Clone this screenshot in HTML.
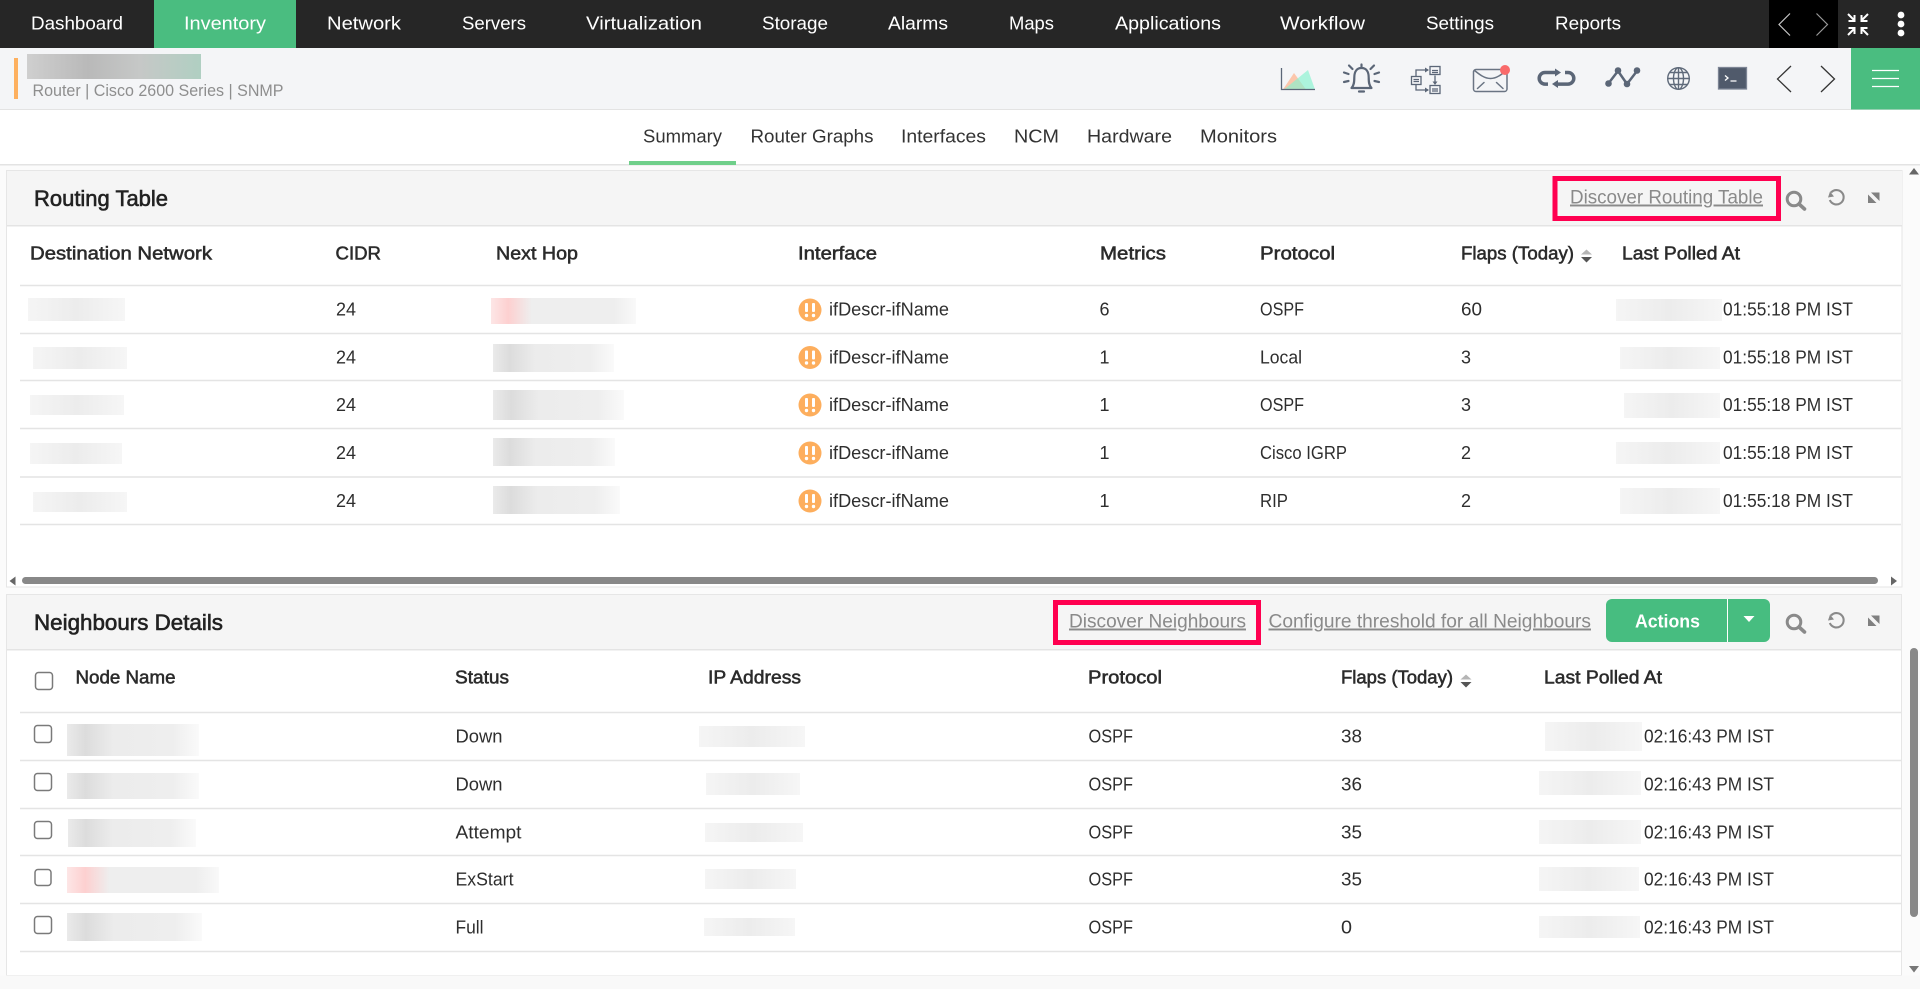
<!DOCTYPE html>
<html>
<head>
<meta charset="utf-8">
<title>Routing Table</title>
<style>
html,body{margin:0;padding:0;background:#fbfbfb;overflow:hidden}
svg{display:block}
text{font-family:"Liberation Sans",sans-serif;font-size:18px;fill:#2e2e2e}
.n{font-size:18.5px;fill:#fff}
.t{font-size:18.5px;fill:#333}
.h{font-size:18.5px;fill:#2b2b2b;stroke:#2b2b2b;stroke-width:.55}
.ti{font-size:22px;fill:#222;stroke:#222;stroke-width:.6}
.l{font-size:19.5px;fill:#8a8a8a;text-decoration:underline}
.s{font-size:17px;fill:#8e8e8e}
.ck{fill:#fff;stroke:#7a7a7a;stroke-width:1.5}
.ic{fill:none;stroke:#5b6677;stroke-linecap:round;stroke-linejoin:round}
</style>
</head>
<body>
<svg xmlns="http://www.w3.org/2000/svg" width="1920" height="989" viewBox="0 0 1920 989">
<defs>
<linearGradient id="p"><stop offset="0" stop-color="#f5f5f5"/><stop offset=".5" stop-color="#ececec"/><stop offset="1" stop-color="#f6f6f6"/></linearGradient>
<linearGradient id="g"><stop offset="0" stop-color="#eaeaea"/><stop offset=".14" stop-color="#dcdcdc"/><stop offset=".35" stop-color="#ececec"/><stop offset=".8" stop-color="#eeeeee"/><stop offset="1" stop-color="#fafafa"/></linearGradient>
<linearGradient id="r"><stop offset="0" stop-color="#fde6e6"/><stop offset=".12" stop-color="#fdd0d0"/><stop offset=".28" stop-color="#eeeeee"/><stop offset=".85" stop-color="#eeeeee"/><stop offset="1" stop-color="#f9f9f9"/></linearGradient>
<linearGradient id="tb"><stop offset="0" stop-color="#cfcfcf"/><stop offset=".35" stop-color="#b9b9b9"/><stop offset=".65" stop-color="#c6c8c7"/><stop offset="1" stop-color="#b0cfc2"/></linearGradient>
<g id="w"><circle cx="0" cy="0" r="11.5" fill="#fdae5d"/><rect x="-5" y="-7" width="3" height="9" rx="1" fill="#fff"/><rect x="2" y="-7" width="3" height="9" rx="1" fill="#fff"/><circle cx="-3.500" cy="5.500" r="1.700" fill="#fff"/><circle cx="3.500" cy="5.500" r="1.700" fill="#fff"/></g>
<g id="tools">
<circle cx="1794" cy="199" r="6.800" fill="none" stroke="#8a8a8a" stroke-width="3"/><path d="M1799 204l5.500 5" stroke="#8a8a8a" stroke-width="3.600" stroke-linecap="round"/>
<path d="M1831 192.500a7.200 7.200 0 1 1-1.200 7.500" fill="none" stroke="#8a8a8a" stroke-width="2.100"/><path d="M1828 197.500l6-1-4-5z" fill="#8a8a8a"/>
<path d="M1871 192.500h8.500v8.500zM1868 194.500v8.500h8.500z" fill="#808080"/>
</g>
</defs>

<rect width="1920" height="989" fill="#fbfbfb"/>

<!-- top nav -->
<rect width="1920" height="48" fill="#262626"/>
<rect x="154" width="142" height="48" fill="#4abd80"/>
<rect x="1769" width="69" height="48" fill="#000"/>
<text class="n" x="31" y="29.500" textLength="92" lengthAdjust="spacingAndGlyphs">Dashboard</text>
<text class="n" x="184" y="29.500" textLength="82" lengthAdjust="spacingAndGlyphs">Inventory</text>
<text class="n" x="327" y="29.500" textLength="74" lengthAdjust="spacingAndGlyphs">Network</text>
<text class="n" x="462" y="29.500" textLength="64" lengthAdjust="spacingAndGlyphs">Servers</text>
<text class="n" x="586" y="29.500" textLength="116" lengthAdjust="spacingAndGlyphs">Virtualization</text>
<text class="n" x="762" y="29.500" textLength="66" lengthAdjust="spacingAndGlyphs">Storage</text>
<text class="n" x="888" y="29.500" textLength="60" lengthAdjust="spacingAndGlyphs">Alarms</text>
<text class="n" x="1009" y="29.500" textLength="45" lengthAdjust="spacingAndGlyphs">Maps</text>
<text class="n" x="1115" y="29.500" textLength="106" lengthAdjust="spacingAndGlyphs">Applications</text>
<text class="n" x="1280" y="29.500" textLength="85" lengthAdjust="spacingAndGlyphs">Workflow</text>
<text class="n" x="1426" y="29.500" textLength="68" lengthAdjust="spacingAndGlyphs">Settings</text>
<text class="n" x="1555" y="29.500" textLength="66" lengthAdjust="spacingAndGlyphs">Reports</text>
<path d="M1790 13.500l-11 11 11 11" fill="none" stroke="#c8c8c8" stroke-width="1.200"/>
<path d="M1816.500 13.500l11 11-11 11" fill="none" stroke="#9a9a9a" stroke-width="1.200"/>
<g fill="none" stroke="#fff" stroke-width="2">
<path d="M1848 14l6 6M1854.500 15v6h-6"/>
<path d="M1868 14l-6 6M1861.500 15v6h6"/>
<path d="M1848 35l6-6M1854.500 34v-6h-6"/>
<path d="M1868 35l-6-6M1861.500 34v-6h6"/>
</g>
<circle cx="1901" cy="15" r="3.400" fill="#fff"/><circle cx="1901" cy="24" r="3.400" fill="#fff"/><circle cx="1901" cy="33" r="3.400" fill="#fff"/>

<!-- sub header -->
<rect y="48" width="1920" height="61" fill="#f4f5f7"/>
<rect y="109" width="1920" height="1.500" fill="#e3e3e3"/>
<rect x="14" y="58" width="4" height="41" fill="#fdb05f"/>
<rect x="27" y="54" width="174" height="25" fill="url(#tb)"/>
<text class="s" x="32.500" y="96" textLength="251" lengthAdjust="spacingAndGlyphs">Router | Cisco 2600 Series  | SNMP</text>
<rect x="1851" y="48" width="69" height="61.500" fill="#4abd80"/>
<path d="M1872 70.500h27M1872 78.500h27M1872 86.500h27" stroke="#fff" stroke-width="1.300"/>

<!-- chart icon -->
<path d="M1283 89.500l11-16.500 12 16.500z" fill="#ffb592" fill-opacity=".75"/>
<path d="M1284 89.500l24-19.500 7 19.500z" fill="#86f3cf" fill-opacity=".65"/>
<path d="M1281.500 68v21.500h33.500" fill="none" stroke="#5b6677" stroke-width="1.300"/>
<!-- bell icon -->
<g class="ic" stroke-width="2.200">
<path d="M1351.500 88c2.500-2.500 2.800-6 2.800-10.500 0-6 2.500-9.500 7.200-9.500s7.200 3.500 7.200 9.500c0 4.500.3 8 2.800 10.500z"/>
<path d="M1359 91.500h5M1361.500 64.500v2M1349 65.500l3.500 3.500M1374 65.500l-3.500 3.500M1344 72.500l4.500 1.500M1379 72.500l-4.500 1.500M1344 82l4.500-1M1379 82l-4.500-1"/>
</g>
<!-- flow icon -->
<g fill="none" stroke="#5b6677" stroke-width="1.300">
<rect x="1430" y="66.500" width="10" height="8"/><rect x="1411.500" y="76.500" width="9.500" height="8"/><rect x="1430" y="85.500" width="10" height="8"/>
<path d="M1432 70.500h6M1432 72.500h6M1413.500 79.500h5.500M1413.500 81.500h5.500M1432 89h6M1432 91h6"/>
<path d="M1416 76v-6h12M1416 85v5h12M1435 75.500v7"/>
</g>
<path d="M1425 67.500l4 2.500-4 2.500zM1425 87.500l4 2.500-4 2.500zM1432.500 81.500h5l-2.500 3.500z" fill="#5b6677"/>
<!-- mail icon -->
<g fill="none" stroke="#6a7483" stroke-width="1.500" stroke-linecap="round">
<rect x="1473.500" y="69.500" width="33.500" height="22" rx="2.500"/>
<path d="M1474.500 70.500c5 4 10 8 16 8s11-4 16-8M1477.500 88.500l6.500-6M1503 88.500l-6.500-6"/>
</g>
<circle cx="1505" cy="70" r="5" fill="#f96a6a"/>
<!-- repeat icon -->
<g fill="none" stroke="#5b6677" stroke-width="3.500">
<path d="M1556 72.500h-11a5.800 5.800 0 0 0 0 11.600h3"/>
<path d="M1556 84.100h12a5.800 5.800 0 0 0 0-11.600h-3"/>
</g>
<path d="M1555 68.500l6 4-6 4zM1558 80l-6 4 6 4z" fill="#5b6677"/>
<!-- path icon -->
<path d="M1608 84l10-13 9 13 10-13" fill="none" stroke="#5b6677" stroke-width="2.500"/>
<g fill="#5b6677"><circle cx="1608.500" cy="83.500" r="3.300"/><circle cx="1618" cy="70.500" r="3.300"/><circle cx="1627" cy="84" r="3.300"/><circle cx="1637" cy="70.500" r="3.300"/></g>
<!-- globe icon -->
<g fill="none" stroke="#5f6a7a" stroke-width="1.400">
<circle cx="1678.500" cy="78.500" r="10.800"/>
<ellipse cx="1678.500" cy="78.500" rx="5" ry="10.800"/>
<path d="M1678.500 67.500v22M1668 78.500h21M1669.500 72.500h18M1669.500 84.500h18"/>
</g>
<!-- terminal icon -->
<rect x="1718.500" y="67.500" width="28" height="21.500" fill="#505a6b" stroke="#7c8494" stroke-width="1.300"/>
<path d="M1725 75.500l3 2.500-3 2.500M1730.500 81h6" fill="none" stroke="#fff" stroke-width="1.300"/>
<path d="M1791 66l-13.500 13 13.500 13" fill="none" stroke="#333" stroke-width="1.300"/>
<path d="M1821 66l13.500 13-13.500 13" fill="none" stroke="#333" stroke-width="1.300"/>

<!-- tabs -->
<rect y="110" width="1920" height="55" fill="#fff"/>
<rect y="164" width="1920" height="1.500" fill="#e3e3e3"/>
<rect x="629" y="161" width="107" height="4" fill="#6fcf8a"/>
<text class="t" x="643" y="142.500" textLength="79" lengthAdjust="spacingAndGlyphs">Summary</text>
<text class="t" x="750.500" y="142.500" textLength="123" lengthAdjust="spacingAndGlyphs">Router Graphs</text>
<text class="t" x="901" y="142.500" textLength="85" lengthAdjust="spacingAndGlyphs">Interfaces</text>
<text class="t" x="1014" y="142.500" textLength="45" lengthAdjust="spacingAndGlyphs">NCM</text>
<text class="t" x="1087" y="142.500" textLength="85" lengthAdjust="spacingAndGlyphs">Hardware</text>
<text class="t" x="1200" y="142.500" textLength="77" lengthAdjust="spacingAndGlyphs">Monitors</text>

<!-- panel 1 -->
<rect x="6.500" y="170.500" width="1895.500" height="416.500" fill="#fff" stroke="#e6e6e6"/>
<rect x="7" y="171" width="1895" height="54" fill="#f5f5f5"/>
<rect x="7" y="225" width="1895" height="1.500" fill="#e4e4e4"/>
<text class="ti" x="34" y="206" textLength="134" lengthAdjust="spacingAndGlyphs">Routing Table</text>
<rect x="1555" y="178.500" width="223.500" height="40" fill="none" stroke="#ff0050" stroke-width="5"/>
<text class="l" x="1570" y="203.500" textLength="193" lengthAdjust="spacingAndGlyphs">Discover Routing Table</text>
<use href="#tools"/>

<text class="h" x="30" y="259.500" textLength="182" lengthAdjust="spacingAndGlyphs">Destination Network</text>
<text class="h" x="335.500" y="259.500" textLength="45.500" lengthAdjust="spacingAndGlyphs">CIDR</text>
<text class="h" x="496" y="259.500" textLength="82" lengthAdjust="spacingAndGlyphs">Next Hop</text>
<text class="h" x="798" y="259.500" textLength="79" lengthAdjust="spacingAndGlyphs">Interface</text>
<text class="h" x="1100" y="259.500" textLength="66" lengthAdjust="spacingAndGlyphs">Metrics</text>
<text class="h" x="1260" y="259.500" textLength="75" lengthAdjust="spacingAndGlyphs">Protocol</text>
<text class="h" x="1461" y="259.500" textLength="113" lengthAdjust="spacingAndGlyphs">Flaps (Today)</text>
<path d="M1581 254.500l5.500-5 5.500 5z" fill="#b5b5b5"/><path d="M1581 257h11l-5.500 5.500z" fill="#555"/>
<text class="h" x="1622" y="259.500" textLength="118" lengthAdjust="spacingAndGlyphs">Last Polled At</text>

<path d="M20 285.500H1901M20 333.500H1901M20 380.500H1901M20 428.500H1901M20 477H1901M20 524.500H1901" stroke="#e4e4e4" stroke-width="1.500"/>

<!-- routing blurs -->
<rect x="28" y="298" width="97" height="23" fill="url(#p)"/>
<rect x="33" y="347" width="94" height="22" fill="url(#p)"/>
<rect x="30" y="395" width="94" height="20" fill="url(#p)"/>
<rect x="30" y="443" width="92" height="21" fill="url(#p)"/>
<rect x="33" y="492" width="94" height="20" fill="url(#p)"/>
<rect x="491" y="298" width="145" height="26" fill="url(#r)"/>
<rect x="493" y="344" width="121" height="28" fill="url(#g)"/>
<rect x="493" y="390" width="131" height="30" fill="url(#g)"/>
<rect x="493" y="438" width="122" height="28" fill="url(#g)"/>
<rect x="493" y="486" width="127" height="28" fill="url(#g)"/>
<rect x="1616" y="299" width="106" height="22" fill="url(#p)"/>
<rect x="1620" y="347" width="100" height="22" fill="url(#p)"/>
<rect x="1624" y="393" width="96" height="25" fill="url(#p)"/>
<rect x="1616" y="442" width="104" height="22" fill="url(#p)"/>
<rect x="1620" y="488" width="100" height="26" fill="url(#p)"/>

<!-- routing rows -->
<text x="336" y="315.500" textLength="20" lengthAdjust="spacingAndGlyphs">24</text>
<use href="#w" x="810" y="310"/>
<text x="829" y="315.500" textLength="120" lengthAdjust="spacingAndGlyphs">ifDescr-ifName</text>
<text x="1099.500" y="315.500" textLength="10" lengthAdjust="spacingAndGlyphs">6</text>
<text x="1260" y="315.500" textLength="44" lengthAdjust="spacingAndGlyphs">OSPF</text>
<text x="1461" y="315.500" textLength="21" lengthAdjust="spacingAndGlyphs">60</text>
<text x="1723" y="315.500" textLength="130" lengthAdjust="spacingAndGlyphs">01:55:18 PM IST</text>

<text x="336" y="363.500" textLength="20" lengthAdjust="spacingAndGlyphs">24</text>
<use href="#w" x="810" y="357.500"/>
<text x="829" y="363.500" textLength="120" lengthAdjust="spacingAndGlyphs">ifDescr-ifName</text>
<text x="1099.500" y="363.500" textLength="10" lengthAdjust="spacingAndGlyphs">1</text>
<text x="1260" y="363.500" textLength="42" lengthAdjust="spacingAndGlyphs">Local</text>
<text x="1461" y="363.500" textLength="10" lengthAdjust="spacingAndGlyphs">3</text>
<text x="1723" y="363.500" textLength="130" lengthAdjust="spacingAndGlyphs">01:55:18 PM IST</text>

<text x="336" y="411" textLength="20" lengthAdjust="spacingAndGlyphs">24</text>
<use href="#w" x="810" y="405"/>
<text x="829" y="411" textLength="120" lengthAdjust="spacingAndGlyphs">ifDescr-ifName</text>
<text x="1099.500" y="411" textLength="10" lengthAdjust="spacingAndGlyphs">1</text>
<text x="1260" y="411" textLength="44" lengthAdjust="spacingAndGlyphs">OSPF</text>
<text x="1461" y="411" textLength="10" lengthAdjust="spacingAndGlyphs">3</text>
<text x="1723" y="411" textLength="130" lengthAdjust="spacingAndGlyphs">01:55:18 PM IST</text>

<text x="336" y="459" textLength="20" lengthAdjust="spacingAndGlyphs">24</text>
<use href="#w" x="810" y="453"/>
<text x="829" y="459" textLength="120" lengthAdjust="spacingAndGlyphs">ifDescr-ifName</text>
<text x="1099.500" y="459" textLength="10" lengthAdjust="spacingAndGlyphs">1</text>
<text x="1260" y="459" textLength="87" lengthAdjust="spacingAndGlyphs">Cisco IGRP</text>
<text x="1461" y="459" textLength="10" lengthAdjust="spacingAndGlyphs">2</text>
<text x="1723" y="459" textLength="130" lengthAdjust="spacingAndGlyphs">01:55:18 PM IST</text>

<text x="336" y="507" textLength="20" lengthAdjust="spacingAndGlyphs">24</text>
<use href="#w" x="810" y="501"/>
<text x="829" y="507" textLength="120" lengthAdjust="spacingAndGlyphs">ifDescr-ifName</text>
<text x="1099.500" y="507" textLength="10" lengthAdjust="spacingAndGlyphs">1</text>
<text x="1260" y="507" textLength="28" lengthAdjust="spacingAndGlyphs">RIP</text>
<text x="1461" y="507" textLength="10" lengthAdjust="spacingAndGlyphs">2</text>
<text x="1723" y="507" textLength="130" lengthAdjust="spacingAndGlyphs">01:55:18 PM IST</text>

<!-- h scrollbar -->
<rect x="22" y="577" width="1856" height="7" rx="3.500" fill="#888"/>
<path d="M15.500 576.500l-6 4.500 6 4.500z" fill="#666"/>
<path d="M1891 576.500l6 4.500-6 4.500z" fill="#666"/>

<!-- panel 2 -->
<rect x="6.500" y="594.500" width="1895" height="381" fill="#fff" stroke="#e6e6e6"/>
<rect x="7" y="595" width="1894" height="54" fill="#f5f5f5"/>
<rect x="7" y="649" width="1894" height="1.500" fill="#e4e4e4"/>
<text class="ti" x="34" y="630" textLength="189" lengthAdjust="spacingAndGlyphs">Neighbours Details</text>
<rect x="1055.500" y="602.500" width="203" height="40" fill="none" stroke="#ff0050" stroke-width="5"/>
<text class="l" x="1069" y="627.500" textLength="177" lengthAdjust="spacingAndGlyphs">Discover Neighbours</text>
<text class="l" x="1268.500" y="627.500" textLength="322.500" lengthAdjust="spacingAndGlyphs">Configure threshold for all Neighbours</text>
<rect x="1606" y="599" width="164" height="43" rx="6" fill="#47bd80"/>
<rect x="1727" y="599" width="1" height="43" fill="#fff"/>
<text x="1635" y="627.500" textLength="65" lengthAdjust="spacingAndGlyphs" style="font-size:18.5px;font-weight:bold;fill:#fff">Actions</text>
<path d="M1743.500 616h11l-5.500 6z" fill="#fff"/>
<use href="#tools" y="423"/>

<rect x="35.500" y="672.500" width="17" height="17" rx="3" class="ck"/>
<text class="h" x="75.500" y="683.500" textLength="100" lengthAdjust="spacingAndGlyphs">Node Name</text>
<text class="h" x="455" y="683.500" textLength="54" lengthAdjust="spacingAndGlyphs">Status</text>
<text class="h" x="708" y="683.500" textLength="93" lengthAdjust="spacingAndGlyphs">IP Address</text>
<text class="h" x="1088" y="683.500" textLength="74" lengthAdjust="spacingAndGlyphs">Protocol</text>
<text class="h" x="1341" y="683.500" textLength="112" lengthAdjust="spacingAndGlyphs">Flaps (Today)</text>
<path d="M1460.500 679.500l5.500-5 5.500 5z" fill="#b5b5b5"/><path d="M1460.500 682h11l-5.500 5.500z" fill="#555"/>
<text class="h" x="1544" y="683.500" textLength="118" lengthAdjust="spacingAndGlyphs">Last Polled At</text>

<path d="M20 712.500H1901M20 760.500H1901M20 808.500H1901M20 855.500H1901M20 903.500H1901M20 951.500H1901" stroke="#e4e4e4" stroke-width="1.500"/>

<!-- neighbour blurs -->
<rect x="67" y="724" width="132" height="32" fill="url(#g)"/>
<rect x="67" y="773" width="132" height="26" fill="url(#g)"/>
<rect x="68" y="819" width="128" height="28" fill="url(#g)"/>
<rect x="67" y="867" width="152" height="26" fill="url(#r)"/>
<rect x="67" y="913" width="135" height="28" fill="url(#g)"/>
<rect x="699" y="726" width="106" height="21" fill="url(#p)"/>
<rect x="706" y="773" width="94" height="22" fill="url(#p)"/>
<rect x="705" y="823" width="98" height="19" fill="url(#p)"/>
<rect x="705" y="869" width="91" height="20" fill="url(#p)"/>
<rect x="704" y="918" width="91" height="18" fill="url(#p)"/>
<rect x="1545" y="722" width="97" height="29" fill="url(#p)"/>
<rect x="1539" y="771" width="102" height="24" fill="url(#p)"/>
<rect x="1539" y="820" width="102" height="24" fill="url(#p)"/>
<rect x="1539" y="867" width="100" height="24" fill="url(#p)"/>
<rect x="1539" y="916" width="101" height="22" fill="url(#p)"/>

<!-- neighbour rows -->
<rect x="34.500" y="725.500" width="17" height="17" rx="3" class="ck"/>
<text x="455.500" y="742.500" textLength="47" lengthAdjust="spacingAndGlyphs">Down</text>
<text x="1088.500" y="742.500" textLength="44.500" lengthAdjust="spacingAndGlyphs">OSPF</text>
<text x="1341" y="742.500" textLength="21" lengthAdjust="spacingAndGlyphs">38</text>
<text x="1644" y="742.500" textLength="130" lengthAdjust="spacingAndGlyphs">02:16:43 PM IST</text>

<rect x="34.500" y="773.500" width="17" height="17" rx="3" class="ck"/>
<text x="455.500" y="790.500" textLength="47" lengthAdjust="spacingAndGlyphs">Down</text>
<text x="1088.500" y="790.500" textLength="44.500" lengthAdjust="spacingAndGlyphs">OSPF</text>
<text x="1341" y="790.500" textLength="21" lengthAdjust="spacingAndGlyphs">36</text>
<text x="1644" y="790.500" textLength="130" lengthAdjust="spacingAndGlyphs">02:16:43 PM IST</text>

<rect x="34.500" y="821.500" width="17" height="17" rx="3" class="ck"/>
<text x="455.500" y="838.500" textLength="66" lengthAdjust="spacingAndGlyphs">Attempt</text>
<text x="1088.500" y="838.500" textLength="44.500" lengthAdjust="spacingAndGlyphs">OSPF</text>
<text x="1341" y="838.500" textLength="21" lengthAdjust="spacingAndGlyphs">35</text>
<text x="1644" y="838.500" textLength="130" lengthAdjust="spacingAndGlyphs">02:16:43 PM IST</text>

<rect x="35" y="869.500" width="16" height="16" rx="3" class="ck"/>
<text x="455.500" y="885.500" textLength="58" lengthAdjust="spacingAndGlyphs">ExStart</text>
<text x="1088.500" y="885.500" textLength="44.500" lengthAdjust="spacingAndGlyphs">OSPF</text>
<text x="1341" y="885.500" textLength="21" lengthAdjust="spacingAndGlyphs">35</text>
<text x="1644" y="885.500" textLength="130" lengthAdjust="spacingAndGlyphs">02:16:43 PM IST</text>

<rect x="34.500" y="916.500" width="17" height="17" rx="3" class="ck"/>
<text x="455.500" y="933.500" textLength="28" lengthAdjust="spacingAndGlyphs">Full</text>
<text x="1088.500" y="933.500" textLength="44.500" lengthAdjust="spacingAndGlyphs">OSPF</text>
<text x="1341" y="933.500" textLength="11" lengthAdjust="spacingAndGlyphs">0</text>
<text x="1644" y="933.500" textLength="130" lengthAdjust="spacingAndGlyphs">02:16:43 PM IST</text>

<!-- bottom strip -->
<rect y="975.500" width="1920" height="13.500" fill="#f9f9f9"/>

<!-- v scrollbar -->
<rect x="1910" y="648" width="8" height="269" rx="4" fill="#888"/>
<path d="M1909 174.500l5-6.500 5 6.500z" fill="#666"/>
<path d="M1909 966h10l-5 6.500z" fill="#777"/>
</svg>
</body>
</html>
